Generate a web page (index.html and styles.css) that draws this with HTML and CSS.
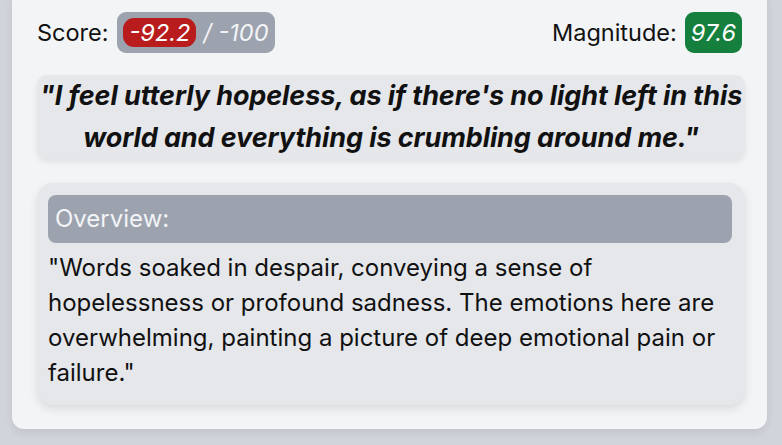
FILE: index.html
```html
<!DOCTYPE html>
<html lang="en">
<head>
<meta charset="utf-8">
<title>Sentiment</title>
<link rel="stylesheet" href="styles.css">
</head>
<body>
<div class="page">
  <div class="card">
    <div class="score-row">
      <div class="metric">
        <span class="label">Score:</span>
        <span class="score-badge"><span class="score-pill">-92.2</span><span class="score-max">/ -100</span></span>
      </div>
      <div class="metric">
        <span class="label">Magnitude:</span>
        <span class="mag-badge">97.6</span>
      </div>
    </div>
    <div class="quote">"I feel utterly hopeless, as if there's no light left in this world and everything is crumbling around me."</div>
    <div class="overview">
      <div class="overview-head">Overview:</div>
      <p class="overview-text">"Words soaked in despair, conveying a sense of hopelessness or profound sadness. The emotions here are overwhelming, painting a picture of deep emotional pain or failure."</p>
    </div>
  </div>
</div>
</body>
</html>
```
FILE: styles.css
```css
html, body {
  margin: 0;
  padding: 0;
}
body {
  background: #d1d5db;
  font-family: Inter, "Noto Sans", sans-serif;
  color: #111;
  width: 782px;
  height: 445px;
  overflow: hidden;
}
.page {
  padding: 0 15px 16px 12px;
}
.card {
  margin-top: -14px;
  background: #f3f4f6;
  border-radius: 12px;
  box-shadow: 0 4px 8px rgba(0,0,0,0.08);
  padding: 26px 22px 24px 25px;
  display: flex;
  flex-direction: column;
}
.score-row {
  display: flex;
  justify-content: space-between;
  align-items: center;
  padding-right: 3px;
  height: 41px;
}
.metric {
  display: flex;
  align-items: center;
  gap: 8px;
  font-size: 23.5px;
}
.score-badge {
  display: flex;
  align-items: center;
  gap: 7px;
  background: #9ca3af;
  border-radius: 9px;
  padding: 6px 7px 6px 6px;
  font-style: italic;
  color: #f3f4f6;
}
.score-pill {
  background: #b91c1c;
  color: #fff;
  border-radius: 11px;
  padding: 0 6px 0 7px;
  line-height: 29px;
}
.score-max {
  line-height: 29px;
}
.mag-badge {
  background: #15803d;
  color: #fff;
  font-style: italic;
  border-radius: 9px;
  padding: 6px 6px;
  line-height: 29px;
}
.quote {
  margin-top: 22px;
  background: #e5e7eb;
  border-radius: 10px;
  box-shadow: 0 3px 6px rgba(0,0,0,0.08);
  font-size: 27px;
  font-weight: 700;
  font-style: italic;
  text-align: center;
  line-height: 42px;
  letter-spacing: -0.1px;
}
.overview {
  margin-top: 24px;
  background: #e5e7eb;
  border-radius: 16px;
  box-shadow: 0 4px 10px rgba(0,0,0,0.1);
  padding: 12px 13px 15px 11px;
}
.overview-head {
  background: #9ca3af;
  color: #f3f4f6;
  border-radius: 8px;
  font-size: 24px;
  line-height: 48px;
  padding: 0 7px;
}
.overview-text {
  margin: 0;
  padding: 7px 12px 0 0;
  font-size: 24px;
  line-height: 35px;
}
```
